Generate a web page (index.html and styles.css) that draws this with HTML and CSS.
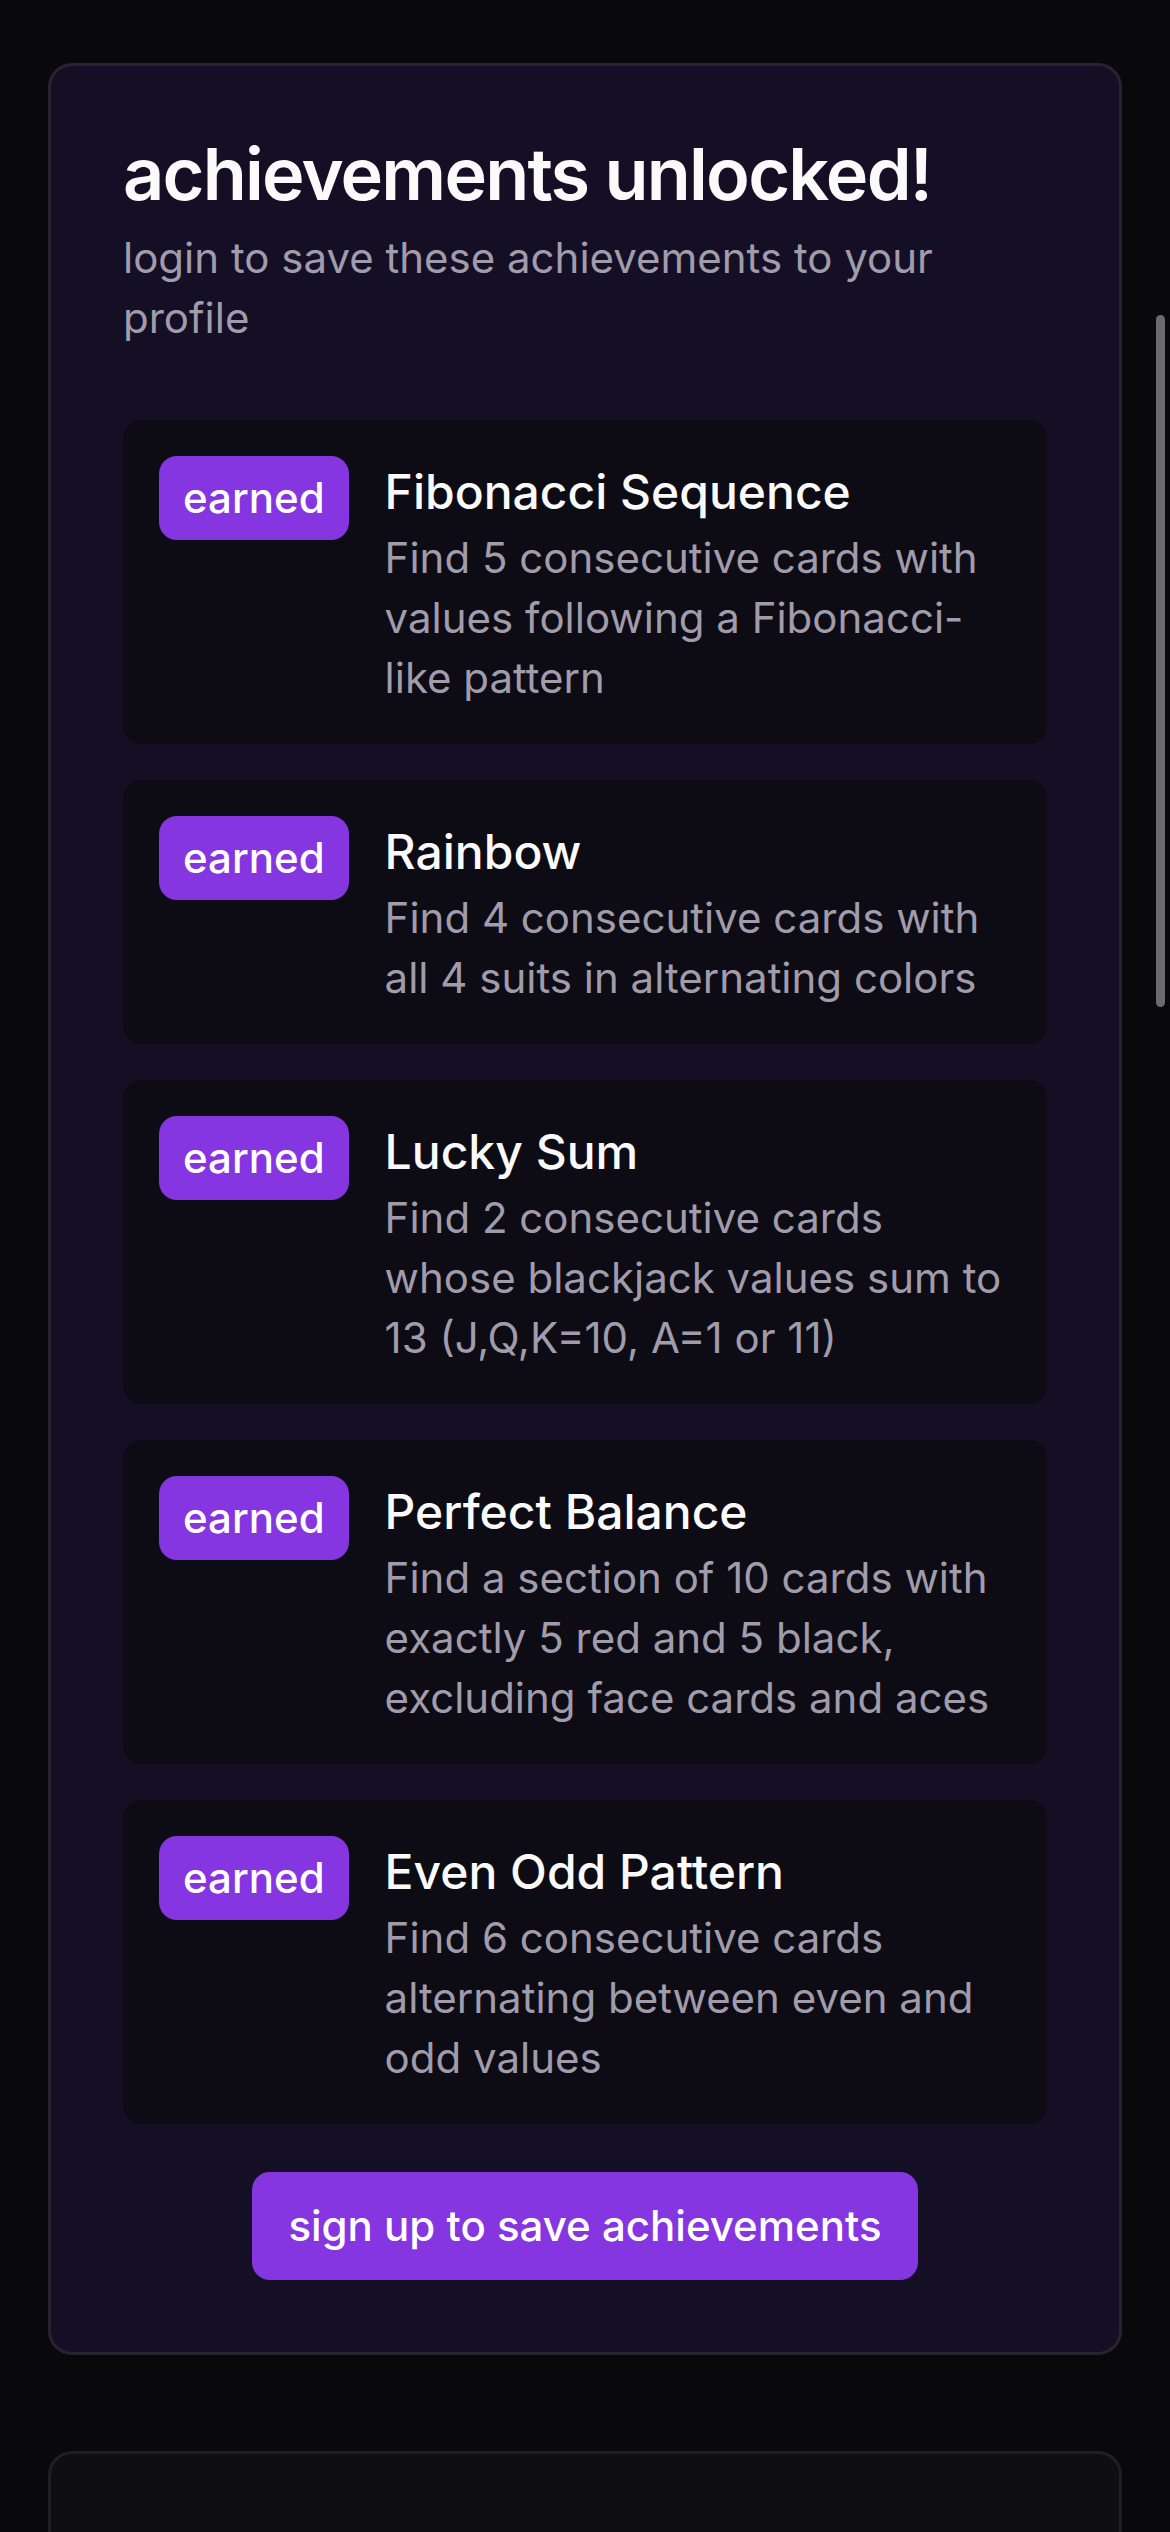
FILE: index.html
```html
<!DOCTYPE html>
<html lang="en">
<head>
<meta charset="utf-8">
<title>achievements unlocked!</title>
<link rel="stylesheet" href="styles.css">
</head>
<body>
<main class="page">
  <section class="card">
    <header class="card-header">
      <h1 class="card-title">achievements unlocked!</h1>
      <p class="card-desc">login to save these achievements to your profile</p>
    </header>
    <div class="card-content">
      <ul class="list">
        <li class="item">
          <span class="badge">earned</span>
          <div class="item-text">
            <h3 class="item-title">Fibonacci Sequence</h3>
            <p class="item-desc">Find 5 consecutive cards with values following a Fibonacci-like pattern</p>
          </div>
        </li>
        <li class="item">
          <span class="badge">earned</span>
          <div class="item-text">
            <h3 class="item-title">Rainbow</h3>
            <p class="item-desc">Find 4 consecutive cards with all 4 suits in alternating colors</p>
          </div>
        </li>
        <li class="item">
          <span class="badge">earned</span>
          <div class="item-text">
            <h3 class="item-title">Lucky Sum</h3>
            <p class="item-desc">Find 2 consecutive cards whose blackjack values sum to 13 (J,Q,K=10, A=1 or 11)</p>
          </div>
        </li>
        <li class="item">
          <span class="badge">earned</span>
          <div class="item-text">
            <h3 class="item-title">Perfect Balance</h3>
            <p class="item-desc">Find a section of 10 cards with exactly 5 red and 5 black, excluding face cards and aces</p>
          </div>
        </li>
        <li class="item">
          <span class="badge">earned</span>
          <div class="item-text">
            <h3 class="item-title">Even Odd Pattern</h3>
            <p class="item-desc">Find 6 consecutive cards alternating between even and odd values</p>
          </div>
        </li>
      </ul>
      <div class="actions">
        <button class="btn" type="button">sign up to save achievements</button>
      </div>
    </div>
  </section>
  <section class="card card-next"></section>
</main>
<div class="scroll-thumb"></div>
</body>
</html>
```

FILE: styles.css
```css
* { box-sizing: border-box; }

html, body {
  margin: 0;
  padding: 0;
  background: #09090b;
}

body {
  font-family: Inter, "Noto Sans", "Liberation Sans", sans-serif;
  color: #fafafa;
  height: 2532px;
  overflow: hidden;
}

.page {
  padding: 63px 48px 0;
  display: flex;
  flex-direction: column;
  gap: 96px;
}

.card {
  background: #150f25;
  border: 3px solid #27232f;
  border-radius: 24px;
}

.card-header {
  padding: 72px 72px 72px;
  display: flex;
  flex-direction: column;
  gap: 18px;
}

.card-title {
  margin: 0;
  font-size: 72px;
  line-height: 72px;
  font-weight: 600;
  letter-spacing: -0.025em;
  color: #fafafa;
}

.card-desc {
  margin: 0;
  font-size: 42px;
  line-height: 60px;
  color: #a09cab;
}

.card-content {
  padding: 0 72px 72px;
}

.list {
  list-style: none;
  margin: 0;
  padding: 0;
  display: flex;
  flex-direction: column;
  gap: 36px;
}

.item {
  background: #0d0b14;
  border-radius: 18px;
  padding: 36px;
  display: flex;
  align-items: flex-start;
  gap: 36px;
}

.badge {
  flex: none;
  background: #8636e0;
  color: #ffffff;
  border-radius: 18px;
  padding: 12px 24px;
  font-size: 42px;
  line-height: 60px;
  font-weight: 500;
}

.item-text {
  flex: 1;
  min-width: 0;
}

.item-title {
  margin: 0;
  font-size: 48px;
  line-height: 72px;
  font-weight: 500;
  color: #fafafa;
}

.item-desc {
  margin: 0;
  font-size: 42px;
  line-height: 60px;
  color: #a09cab;
}

.actions {
  display: flex;
  justify-content: center;
  margin-top: 48px;
}

.btn {
  background: #8636e0;
  color: #ffffff;
  border: 0;
  border-radius: 18px;
  height: 108px;
  padding: 0 36px;
  font-family: inherit;
  font-size: 42px;
  font-weight: 500;
  line-height: 60px;
}

.card-next {
  background: #0f0f11;
  border-color: #1f1f23;
  height: 400px;
}

.scroll-thumb {
  position: fixed;
  right: 5px;
  top: 315px;
  width: 9px;
  height: 692px;
  border-radius: 5px;
  background: #6b6b6b;
}
```
